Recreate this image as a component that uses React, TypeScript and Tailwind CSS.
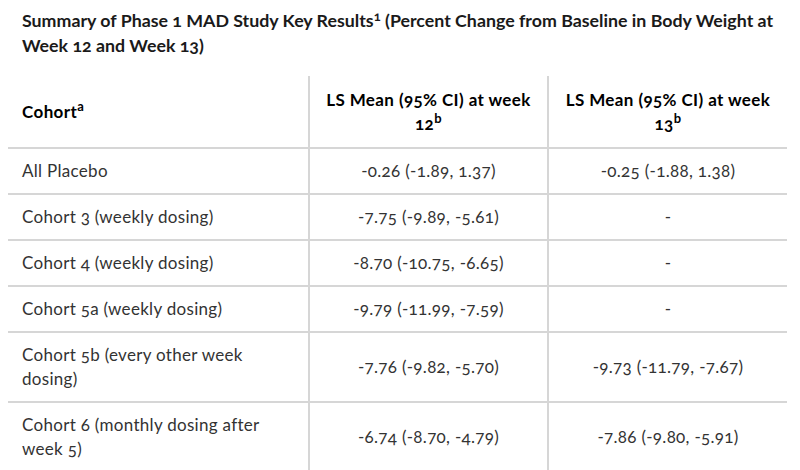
import React from "react";

const rows: [string, string, string][] = [
  ["All Placebo", "-0.26 (-1.89, 1.37)", "-0.25 (-1.88, 1.38)"],
  ["Cohort 3 (weekly dosing)", "-7.75 (-9.89, -5.61)", "-"],
  ["Cohort 4 (weekly dosing)", "-8.70 (-10.75, -6.65)", "-"],
  ["Cohort 5a (weekly dosing)", "-9.79 (-11.99, -7.59)", "-"],
  ["Cohort 5b (every other week dosing)", "-7.76 (-9.82, -5.70)", "-9.73 (-11.79, -7.67)"],
  ["Cohort 6 (monthly dosing after week 5)", "-6.74 (-8.70, -4.79)", "-7.86 (-9.80, -5.91)"],
];

export default function App() {
  return (
    <div
      className="w-[800px] h-[470px] overflow-hidden bg-white oldstyle-nums"
      style={{ fontFamily: "Lato, 'Noto Sans', sans-serif" }}
    >
      <h1 className="pl-[22px] pr-[8px] pt-[8px] text-[17.8px] leading-[25px] font-bold text-[#1a1a1a]">
        Summary of Phase 1 MAD Study Key Results<sup className="text-[13px]">1</sup> (Percent Change from Baseline in Body Weight at Week 12 and Week 13)
      </h1>
      <table className="ml-[8px] mt-[18px] w-[779px] border-collapse table-fixed">
        <colgroup>
          <col className="w-[301px]" />
          <col className="w-[239px]" />
          <col className="w-[239px]" />
        </colgroup>
        <thead>
          <tr className="h-[72px] border-b-2 border-[#d6d6d6]">
            <th className="pl-[14px] text-left text-[17px] tracking-[0.4px] font-bold text-black border-r-2 border-[#d6d6d6]">
              Cohort<sup className="text-[13px]">a</sup>
            </th>
            <th className="px-3 text-center text-[17px] tracking-[0.4px] leading-[24px] font-bold text-black border-r-2 border-[#d6d6d6]">
              LS Mean (95% CI) at week 12<sup className="text-[13px]">b</sup>
            </th>
            <th className="px-3 text-center text-[17px] tracking-[0.4px] leading-[24px] font-bold text-black">
              LS Mean (95% CI) at week 13<sup className="text-[13px]">b</sup>
            </th>
          </tr>
        </thead>
        <tbody>
          {rows.map((r, i) => (
            <tr
              key={i}
              className={`${i >= 4 ? "h-[70px]" : "h-[46px]"} border-b-2 border-[#d6d6d6]`}
            >
              <td className="pl-[14px] pr-[30px] text-[17px] tracking-[0.3px] leading-[24px] text-[#333] border-r-2 border-[#d6d6d6]">
                {r[0]}
              </td>
              <td className="px-2 text-center text-[17px] tracking-[0.3px] leading-[24px] text-[#333] border-r-2 border-[#d6d6d6]">
                {r[1]}
              </td>
              <td className="px-2 text-center text-[17px] tracking-[0.3px] leading-[24px] text-[#333]">{r[2]}</td>
            </tr>
          ))}
        </tbody>
      </table>
    </div>
  );
}
